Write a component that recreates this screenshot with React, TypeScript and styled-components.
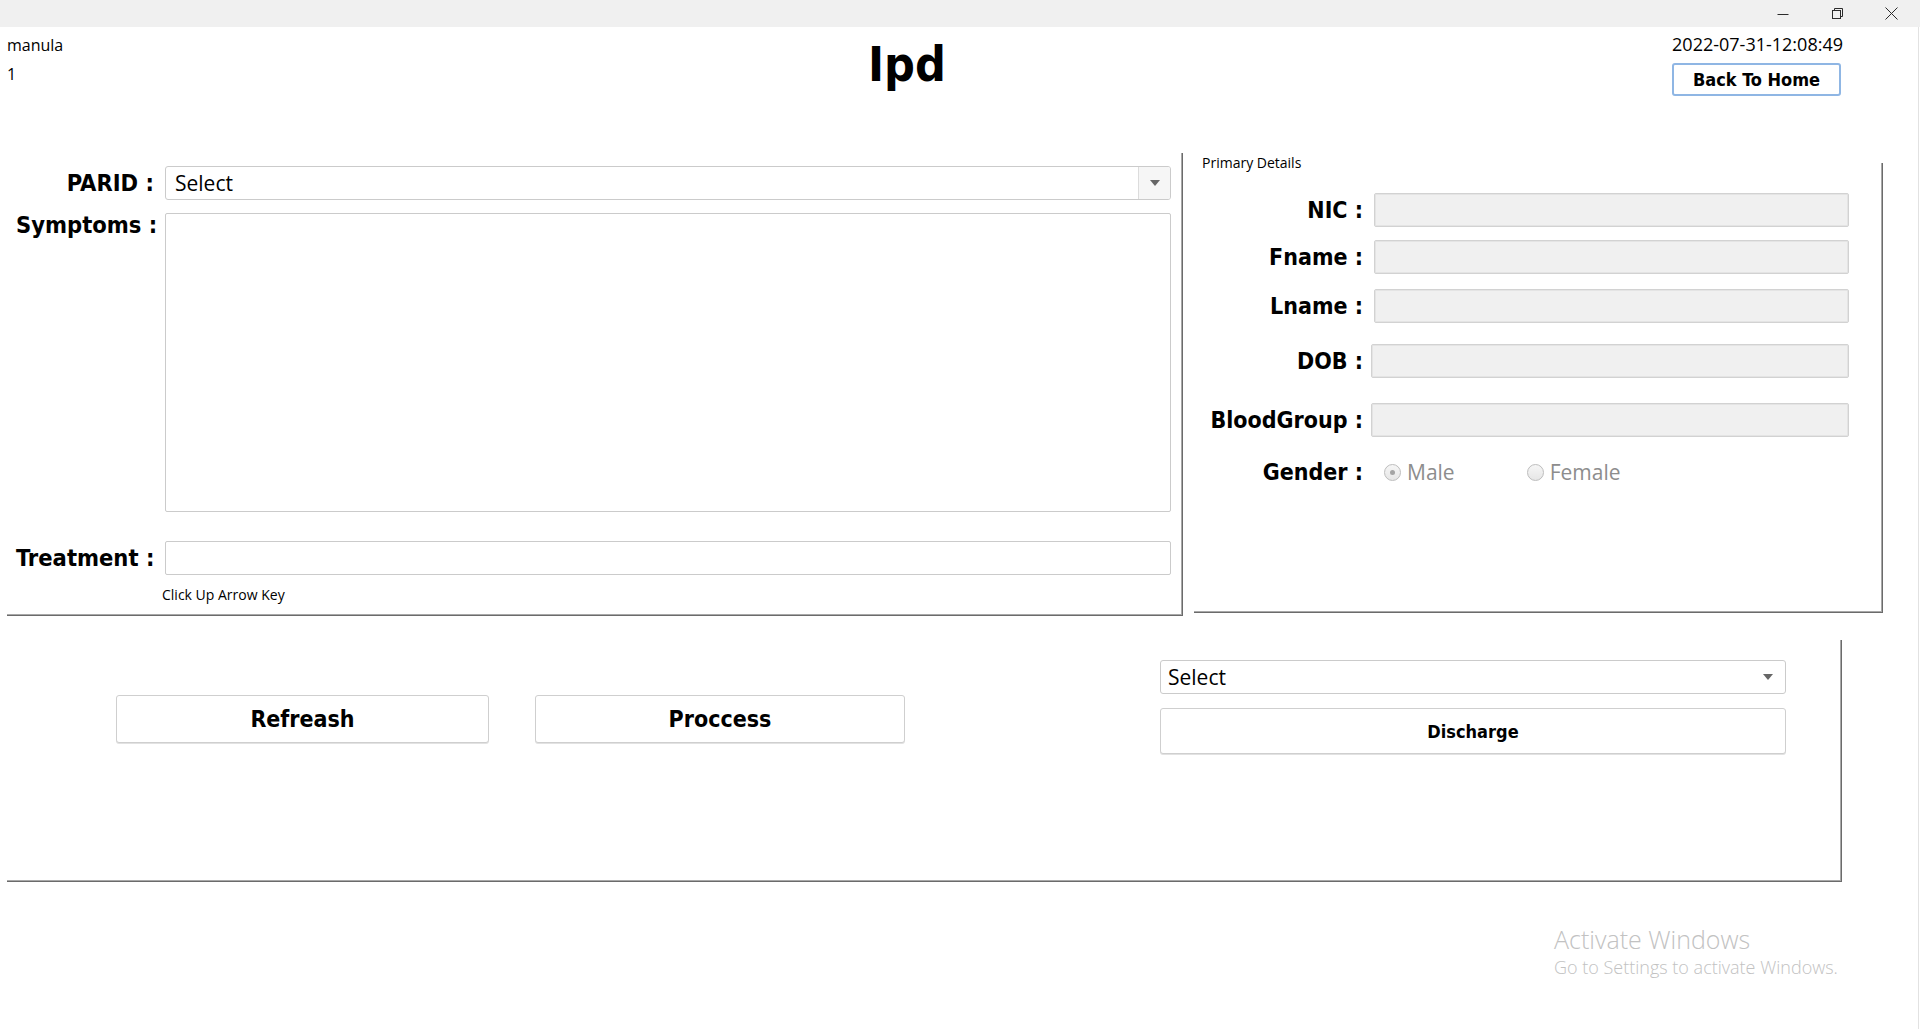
import React from "react";
import styled, { createGlobalStyle } from "styled-components";

const GlobalStyle = createGlobalStyle`
  html, body { margin: 0; padding: 0; background: #ffffff; }
  body { font-family: "Open Sans", "Noto Sans", sans-serif; color: #000; }
  *, *::before, *::after { box-sizing: border-box; }
`;

const BOLD = `"DejaVu Sans Condensed", "DejaVu Sans", sans-serif`;

const Window = styled.div`
  position: relative;
  width: 1920px;
  height: 1029px;
  display: flex;
  flex-direction: column;
  overflow: hidden;
  background: #fff;
`;

const TitleBar = styled.div`
  height: 27px;
  flex: 0 0 27px;
  background: #f0f0f0;
  display: flex;
  justify-content: flex-end;
  padding-right: 2px;
`;

const CaptionButton = styled.div`
  width: 54px;
  height: 27px;
  display: flex;
  align-items: center;
  justify-content: center;
  color: #2b2b2b;
`;

const Content = styled.div`
  flex: 1;
  display: flex;
  flex-direction: column;
  padding-left: 7px;
  margin-right: 1px;
  border-right: 1px solid #e2e2e2;
`;

const Header = styled.div`
  height: 126px;
  display: grid;
  grid-template-columns: 861px auto 1fr;
`;

const UserInfo = styled.div`
  padding-top: 7px;
  display: flex;
  flex-direction: column;
  gap: 7px;
  font-size: 16px;
  line-height: 22px;
`;

const Title = styled.h1`
  margin: 11px 0 0 0;
  font-family: ${BOLD};
  font-stretch: condensed;
  font-weight: 700;
  font-size: 48px;
  line-height: 52px;
`;

const HeaderRight = styled.div`
  display: flex;
  flex-direction: column;
  align-items: flex-end;
  padding-top: 5px;
  padding-right: 75px;
  gap: 7px;
`;

const DateText = styled.div`
  font-size: 18px;
  line-height: 24px;
`;

const HomeButton = styled.button`
  width: 169px;
  height: 33px;
  margin-right: 2px;
  background: #fff;
  border: 2px solid #8fb6e4;
  border-radius: 3px;
  font-family: ${BOLD};
  font-stretch: condensed;
  font-weight: 700;
  font-size: 18px;
  color: #000;
  padding: 0;
`;

const TopRow = styled.div`
  display: flex;
  align-items: flex-start;
  height: 463px;
`;

const LeftPanel = styled.div`
  width: 1176px;
  height: 463px;
  border-style: solid;
  border-color: #6b6b6b;
  border-width: 0 1px 1px 0;
  box-shadow: inset -1px -1px 0 #a8a8a8;
  padding: 13px 0 0 9px;
  display: flex;
  flex-direction: column;
`;

const FormRow = styled.div<{ $mt?: number; $top?: boolean }>`
  display: flex;
  align-items: ${(p) => (p.$top ? "flex-start" : "center")};
  margin-top: ${(p) => p.$mt ?? 0}px;
`;

const Label = styled.div<{ $w: number; $top?: boolean; $size?: number }>`
  width: ${(p) => p.$w}px;
  flex: 0 0 ${(p) => p.$w}px;
  text-align: right;
  font-family: ${BOLD};
  font-stretch: condensed;
  font-weight: 700;
  font-size: ${(p) => p.$size ?? 23}px;
  line-height: ${(p) => (p.$top ? "24px" : "34px")};
  white-space: nowrap;
`;

const Combo = styled.div<{ $w?: number; $divider?: boolean; $pad?: number }>`
  ${(p) => (p.$w ? `width: ${p.$w}px;` : "")}
  height: 34px;
  margin-left: ${(p) => (p.$divider ? 11 : 0)}px;
  border: 1px solid #cbcbcb;
  border-radius: 3px;
  background: #fff;
  display: flex;
  align-items: stretch;
  font-size: 21px;
  line-height: 32px;
  padding-left: ${(p) => p.$pad ?? 9}px;
`;

const ComboText = styled.span`
  flex: 1;
`;

const ComboArrow = styled.span<{ $divider?: boolean }>`
  width: ${(p) => (p.$divider ? 32 : 34)}px;
  display: flex;
  align-items: center;
  justify-content: center;
  ${(p) =>
    p.$divider
      ? `border-left: 1px solid #dcdcdc; background: #f6f6f6; border-radius: 0 2px 2px 0;`
      : ""}
  &::after {
    content: "";
    width: 0;
    height: 0;
    border-left: 5px solid transparent;
    border-right: 5px solid transparent;
    border-top: 6px solid #666;
  }
`;

const TextArea = styled.div`
  width: 1006px;
  height: 299px;
  margin-left: 11px;
  border: 1px solid #cbcbcb;
  border-radius: 2px;
  background: #fff;
`;

const TextInput = styled.div<{ $w?: number; $gap?: number; $disabled?: boolean; $h?: number }>`
  ${(p) => (p.$w ? `width: ${p.$w}px;` : "flex: 1;")}
  height: ${(p) => p.$h ?? 34}px;
  margin-left: ${(p) => p.$gap ?? 11}px;
  border: 1px solid ${(p) => (p.$disabled ? "#d2d2d2" : "#cbcbcb")};
  border-radius: 2px;
  background: ${(p) => (p.$disabled ? "#f0f0f0" : "#fff")};
  box-shadow: ${(p) => (p.$disabled ? "inset 0 0 0 1px #e4e4e4" : "none")};
`;

const Hint = styled.div`
  margin-top: 10px;
  margin-left: 146px;
  font-size: 14px;
  line-height: 19px;
`;

const DetailsFrame = styled.fieldset`
  margin: 0 0 0 11px;
  padding: 0 33px 0 0;
  width: 689px;
  height: 460px;
  min-inline-size: 0;
  border-style: solid;
  border-color: #6b6b6b;
  border-width: 0 1px 1px 0;
  box-shadow: inset -1px -1px 0 #a8a8a8;
  display: flex;
  flex-direction: column;
`;

const FrameLegend = styled.legend`
  margin-left: 8px;
  padding: 0;
  font-size: 14px;
  line-height: 19px;
`;

const RadioGroup = styled.div`
  display: flex;
  align-items: center;
  gap: 72px;
  margin-left: 21px;
`;

const RadioOption = styled.div`
  display: flex;
  align-items: center;
  gap: 6px;
  font-size: 21px;
  line-height: 34px;
  color: #8d8d8d;
`;

const RadioCircle = styled.span<{ $checked?: boolean }>`
  width: 17px;
  height: 17px;
  border-radius: 50%;
  border: 1px solid #bdbdbd;
  background: linear-gradient(#f6f6f6, #e6e6e6);
  display: flex;
  align-items: center;
  justify-content: center;
  &::after {
    content: "";
    width: 5px;
    height: 5px;
    border-radius: 50%;
    background: ${(p) => (p.$checked ? "#a4a4a4" : "transparent")};
  }
`;

const BottomPanel = styled.div`
  margin-top: 24px;
  width: 1835px;
  height: 242px;
  border-style: solid;
  border-color: #6b6b6b;
  border-width: 0 1px 1px 0;
  box-shadow: inset -1px -1px 0 #a8a8a8;
  padding-left: 109px;
  display: flex;
  align-items: flex-start;
`;

const ActionButton = styled.button<{ $w: number; $ml?: number }>`
  width: ${(p) => p.$w}px;
  height: 48px;
  margin-top: 55px;
  margin-left: ${(p) => p.$ml ?? 0}px;
  background: #fff;
  border: 1px solid #cfcfcf;
  border-radius: 3px;
  box-shadow: 0 1px 0 #e2e2e2;
  font-family: ${BOLD};
  font-stretch: condensed;
  font-weight: 700;
  font-size: 23px;
  color: #000;
  padding: 0;
`;

const DischargeGroup = styled.div`
  margin-left: 255px;
  margin-top: 20px;
  width: 626px;
  display: flex;
  flex-direction: column;
  gap: 14px;
`;

const DischargeButton = styled.button`
  height: 46px;
  background: #fff;
  border: 1px solid #cfcfcf;
  border-radius: 3px;
  box-shadow: 0 1px 0 #e2e2e2;
  font-family: ${BOLD};
  font-stretch: condensed;
  font-weight: 700;
  font-size: 18px;
  color: #000;
  padding: 0;
`;

const Watermark = styled.div`
  position: absolute;
  left: 1554px;
  top: 922px;
  color: #c2c2c2;
  font-weight: 300;
`;

const WatermarkTitle = styled.div`
  font-size: 25px;
  line-height: 34px;
`;

const WatermarkSub = styled.div`
  font-size: 18px;
  line-height: 23px;
`;

const MinimizeIcon = () => (
  <svg width="12" height="12" viewBox="0 0 12 12">
    <path d="M0.5 6.5h11" stroke="currentColor" strokeWidth="1" fill="none" />
  </svg>
);

const RestoreIcon = () => (
  <svg width="13" height="13" viewBox="0 0 13 13">
    <rect x="1.5" y="3.5" width="8" height="8" stroke="currentColor" fill="none" />
    <path d="M3.5 3.5V1.5h8v8h-2" stroke="currentColor" fill="none" />
  </svg>
);

const CloseIcon = () => (
  <svg width="13" height="13" viewBox="0 0 13 13">
    <path d="M0.5 0.5l12 12M12.5 0.5l-12 12" stroke="currentColor" strokeWidth="1" fill="none" />
  </svg>
);

const details: { label: string; mt: number; gap: number }[] = [
  { label: "NIC :", mt: 21, gap: 11 },
  { label: "Fname :", mt: 13, gap: 11 },
  { label: "Lname :", mt: 15, gap: 11 },
  { label: "DOB :", mt: 21, gap: 8 },
  { label: "BloodGroup :", mt: 25, gap: 8 },
];

export default function App() {
  return (
    <>
      <GlobalStyle />
      <Window>
        <TitleBar>
          <CaptionButton>
            <MinimizeIcon />
          </CaptionButton>
          <CaptionButton>
            <RestoreIcon />
          </CaptionButton>
          <CaptionButton>
            <CloseIcon />
          </CaptionButton>
        </TitleBar>
        <Content>
          <Header>
            <UserInfo>
              <div>manula</div>
              <div>1</div>
            </UserInfo>
            <Title>Ipd</Title>
            <HeaderRight>
              <DateText>2022-07-31-12:08:49</DateText>
              <HomeButton>Back To Home</HomeButton>
            </HeaderRight>
          </Header>

          <TopRow>
            <LeftPanel>
              <FormRow>
                <Label $w={138} $size={23.5}>PARID :</Label>
                <Combo $w={1006} $divider $pad={9}>
                  <ComboText>Select</ComboText>
                  <ComboArrow $divider />
                </Combo>
              </FormRow>
              <FormRow $mt={13} $top>
                <Label $w={138} $top $size={23.5}>
                  Symptoms :
                </Label>
                <TextArea />
              </FormRow>
              <FormRow $mt={29}>
                <Label $w={138} $size={23.5}>Treatment :</Label>
                <TextInput $w={1006} />
              </FormRow>
              <Hint>Click Up Arrow Key</Hint>
            </LeftPanel>

            <DetailsFrame>
              <FrameLegend>Primary Details</FrameLegend>
              {details.map((d) => (
                <FormRow key={d.label} $mt={d.mt}>
                  <Label $w={169}>{d.label}</Label>
                  <TextInput $gap={d.gap} $disabled />
                </FormRow>
              ))}
              <FormRow $mt={18}>
                <Label $w={169}>Gender :</Label>
                <RadioGroup>
                  <RadioOption>
                    <RadioCircle $checked />
                    Male
                  </RadioOption>
                  <RadioOption>
                    <RadioCircle />
                    Female
                  </RadioOption>
                </RadioGroup>
              </FormRow>
            </DetailsFrame>
          </TopRow>

          <BottomPanel>
            <ActionButton $w={373}>Refreash</ActionButton>
            <ActionButton $w={370} $ml={46}>
              Proccess
            </ActionButton>
            <DischargeGroup>
              <Combo $pad={7}>
                <ComboText>Select</ComboText>
                <ComboArrow />
              </Combo>
              <DischargeButton>Discharge</DischargeButton>
            </DischargeGroup>
          </BottomPanel>
        </Content>
        <Watermark>
          <WatermarkTitle>Activate Windows</WatermarkTitle>
          <WatermarkSub>Go to Settings to activate Windows.</WatermarkSub>
        </Watermark>
      </Window>
    </>
  );
}
